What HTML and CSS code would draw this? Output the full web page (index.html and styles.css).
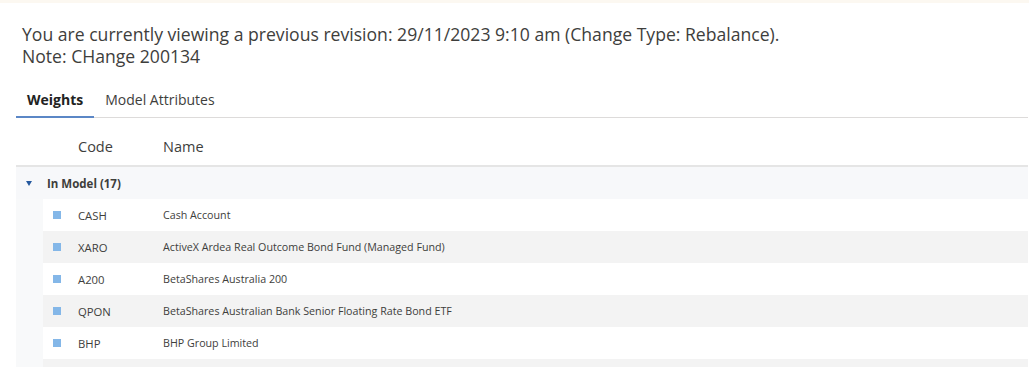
FILE: index.html
```html
<!DOCTYPE html>
<html lang="en">
<head>
    <meta charset="UTF-8">
    <title>Model Revision</title>
    <link rel="stylesheet" href="styles.css">
</head>
<body>
    <div class="top-band"></div>

    <div class="page">
        <div class="notice">
            <div>You are currently viewing a previous revision: 29/11/2023 9:10 am (Change Type: Rebalance).</div>
            <div>Note: CHange 200134</div>
        </div>

        <div class="tabs">
            <div class="tab active">Weights</div>
            <div class="tab">Model Attributes</div>
        </div>

        <div class="grid">
            <div class="grid-head">
                <div class="cell-toggle"></div>
                <div class="cell-icon"></div>
                <div class="cell-code">Code</div>
                <div class="cell-name">Name</div>
            </div>

            <div class="group-row">
                <span class="caret"></span>
                <span class="group-label">In Model (17)</span>
            </div>

            <div id="rows"></div>
        </div>
    </div>

    <script>
        // holdings in the model
        const holdings = [
            { code: "CASH", name: "Cash Account" },
            { code: "XARO", name: "ActiveX Ardea Real Outcome Bond Fund (Managed Fund)" },
            { code: "A200", name: "BetaShares Australia 200" },
            { code: "QPON", name: "BetaShares Australian Bank Senior Floating Rate Bond ETF" },
            { code: "BHP", name: "BHP Group Limited" },
            { code: "", name: "" }
        ];

        document.getElementById('rows').innerHTML = holdings.map(h => `
            <div class="data-row">
                <div class="cell-indent"></div>
                <div class="row-body">
                    <div class="cell-icon">${h.code ? '<span class="swatch"></span>' : ''}</div>
                    <div class="cell-code">${h.code}</div>
                    <div class="cell-name">${h.name}</div>
                </div>
            </div>
        `).join('');
    </script>
</body>
</html>
```

FILE: styles.css
```css
html, body {
    height: 100%;
}

body {
    margin: 0;
    font-family: "Open Sans", Arial, sans-serif;
    color: #3e3e3c;
    background: #fff;
    overflow: hidden;
}

.top-band {
    height: 3px;
    background: #fcf8f1;
}

.page {
    padding: 0 1px 0 16px;
}

.notice {
    padding: 20px 0 0 6px;
    font-size: 17.6px;
    line-height: 22px;
}

.tabs {
    display: flex;
    margin-top: 19px;
    border-bottom: 1px solid #dddbda;
}

.tab {
    padding: 5px 11px 7px 11px;
    font-size: 14px;
    line-height: 18px;
    border-bottom: 2px solid transparent;
    margin-bottom: -1px;
}

.tab.active {
    font-weight: bold;
    color: #222;
    border-bottom-color: #5b87c6;
}

.grid-head {
    display: flex;
    align-items: center;
    height: 37px;
    padding-top: 10px;
    font-size: 14.5px;
    border-bottom: 2px solid #e5e5e5;
}

.cell-toggle {
    width: 27px;
}

.cell-icon {
    width: 35px;
    display: flex;
    align-items: center;
    padding-left: 10px;
    box-sizing: border-box;
}

.cell-code {
    width: 85px;
}

.cell-name {
    flex: 1;
}

.grid-head .cell-icon {
    padding: 0;
}

.group-row {
    display: flex;
    align-items: center;
    height: 32px;
    background: #f7f8fa;
    font-size: 11.5px;
    font-weight: bold;
}

.caret {
    width: 0;
    height: 0;
    margin: 0 15px 0 10px;
    border-left: 3.5px solid transparent;
    border-right: 3.5px solid transparent;
    border-top: 5px solid #25599e;
}

.data-row {
    display: flex;
    height: 32px;
    background: #f8f9fa;
}

.cell-indent {
    width: 27px;
}

.row-body {
    flex: 1;
    display: flex;
    align-items: center;
    font-size: 10.7px;
    background: #fff;
}

.data-row:nth-child(even) .row-body {
    background: #f3f3f3;
}

.row-body .cell-code {
    font-size: 11.3px;
}

.swatch {
    width: 8px;
    height: 8px;
    background: #84b7e8;
}
```
